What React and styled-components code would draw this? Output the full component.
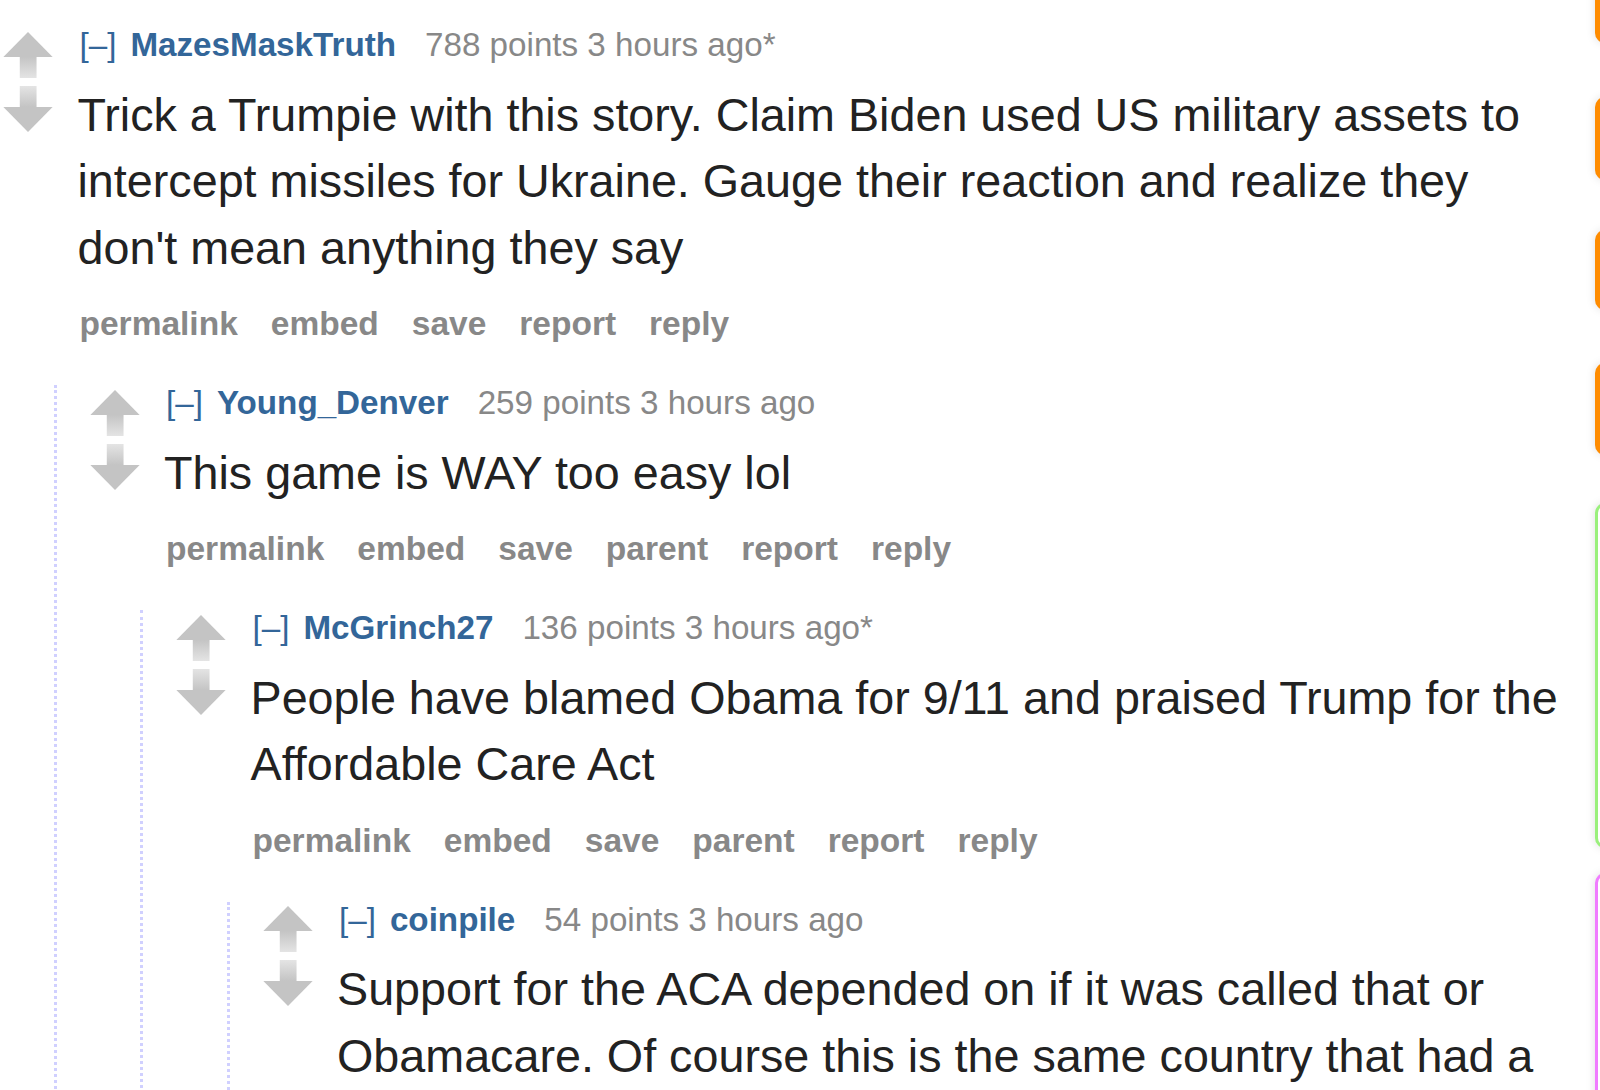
import React, { useId } from 'react'
import styled, { createGlobalStyle } from 'styled-components'

const GlobalStyle = createGlobalStyle`
    html, body {
        margin: 0;
        padding: 0;
        overflow: hidden;
        background: #fff;
    }
    body {
        font-family: "Liberation Sans", Arial, sans-serif;
    }
`

const Page = styled.div`
    display: flex;
    width: 1600px;
    height: 1090px;
    overflow: hidden;
`

const Main = styled.div`
    flex: 0 0 1572px;
    padding: 27px 0 0 3px;
    box-sizing: border-box;
`

const Side = styled.div`
    flex: 0 0 300px;
    margin-left: 23px;
    margin-top: -40px;
    display: flex;
    flex-direction: column;
`

const SideBox = styled.div`
    flex-shrink: 0;
    height: ${props => props.$h}px;
    margin-top: ${props => props.$mt}px;
    border-radius: 10px 0 0 10px;
    box-sizing: border-box;
    background: ${props => props.$fill || '#fff'};
    border: ${props => props.$line ? `3px solid ${props.$line}` : 'none'};
    box-shadow: 0 0 10px rgba(0, 0, 0, 0.13);
`

const Thing = styled.div``

const Row = styled.div`
    display: flex;
`

const Midcol = styled.div`
    flex: 0 0 74.5px;
    padding-top: 4.5px;
    display: flex;
    flex-direction: column;
    gap: 8px;
`

const ArrowSvg = styled.svg`
    width: 50px;
    height: 46px;
    display: block;
    transform: ${props => props.$down ? 'scaleY(-1)' : 'none'};
`

const Entry = styled.div`
    flex: 1;
    min-width: 0;
`

const Tagline = styled.div`
    font-size: 33.2px;
    line-height: 35px;
    height: 35px;
    color: #888;
    white-space: nowrap;
    padding-left: 2px;
`

const Expand = styled.span`
    color: #369;
    margin-right: 14px;
`

const Author = styled.span`
    color: #369;
    font-weight: bold;
    margin-right: 29px;
`

const Body = styled.p`
    margin: 19.5px 0 0;
    font-size: 46.7px;
    line-height: 66.5px;
    color: #222;
`

const Buttons = styled.ul`
    list-style: none;
    margin: 25px 0 0;
    padding: 0 0 0 2px;
    display: flex;
    gap: 33px;
    font-size: 33.5px;
    line-height: 35px;
    font-weight: bold;
    color: #888;
`

const Button = styled.li``

const Child = styled.div`
    margin: 44px 0 0 50.5px;
    border-left: 3px dotted #d0d0ff;
    padding-left: 33px;
`

function Arrow({ down }) {
    const id = 'g' + useId().replace(/[^a-zA-Z0-9]/g, '')
    return (
        <ArrowSvg viewBox="0 0 15 14" $down={down}>
            <defs>
                <linearGradient id={id} x1="0" y1="0" x2="0" y2="1">
                    <stop offset="0" stopColor="#c4c4c4" />
                    <stop offset="1" stopColor="#e4e4e4" />
                </linearGradient>
            </defs>
            <polygon points="7.5,0 15,7.6 0,7.6" fill="#c4c4c4" />
            <rect x="5" y="7.6" width="5.1" height="6.4" fill={`url(#${id})`} />
        </ArrowSvg>
    )
}

const thread = {
    author: 'MazesMaskTruth',
    meta: '788 points 3 hours ago*',
    text: 'Trick a Trumpie with this story. Claim Biden used US military assets to intercept missiles for Ukraine. Gauge their reaction and realize they don\'t mean anything they say',
    top: true,
    reply: {
        author: 'Young_Denver',
        meta: '259 points 3 hours ago',
        text: 'This game is WAY too easy lol',
        reply: {
            author: 'McGrinch27',
            meta: '136 points 3 hours ago*',
            text: 'People have blamed Obama for 9/11 and praised Trump for the Affordable Care Act',
            reply: {
                author: 'coinpile',
                meta: '54 points 3 hours ago',
                text: 'Support for the ACA depended on if it was called that or Obamacare. Of course this is the same country that had a',
            },
        },
    },
}

function Comment({ data }) {
    const links = data.top
        ? ['permalink', 'embed', 'save', 'report', 'reply']
        : ['permalink', 'embed', 'save', 'parent', 'report', 'reply']
    return (
        <Thing>
            <Row>
                <Midcol>
                    <Arrow />
                    <Arrow down />
                </Midcol>
                <Entry>
                    <Tagline>
                        <Expand>[–]</Expand>
                        <Author>{data.author}</Author>
                        {data.meta}
                    </Tagline>
                    <Body>{data.text}</Body>
                    <Buttons>
                        {links.map(l => <Button key={l}>{l}</Button>)}
                    </Buttons>
                </Entry>
            </Row>
            {data.reply && (
                <Child>
                    <Comment data={data.reply} />
                </Child>
            )}
        </Thing>
    )
}

const boxes = [
    { h: 83, mt: 0, fill: '#ff8c00' },
    { h: 83, mt: 54, fill: '#ff8c00' },
    { h: 80, mt: 50, fill: '#ff8c00' },
    { h: 92, mt: 53, fill: '#ff8c00' },
    { h: 345, mt: 48, line: '#9af07c' },
    { h: 400, mt: 25, line: '#f07cff' },
]

export default function App() {
    return (
        <Page>
            <GlobalStyle />
            <Main>
                <Comment data={thread} />
            </Main>
            <Side>
                {boxes.map((b, i) => (
                    <SideBox key={i} $h={b.h} $mt={b.mt} $fill={b.fill} $line={b.line} />
                ))}
            </Side>
        </Page>
    )
}
